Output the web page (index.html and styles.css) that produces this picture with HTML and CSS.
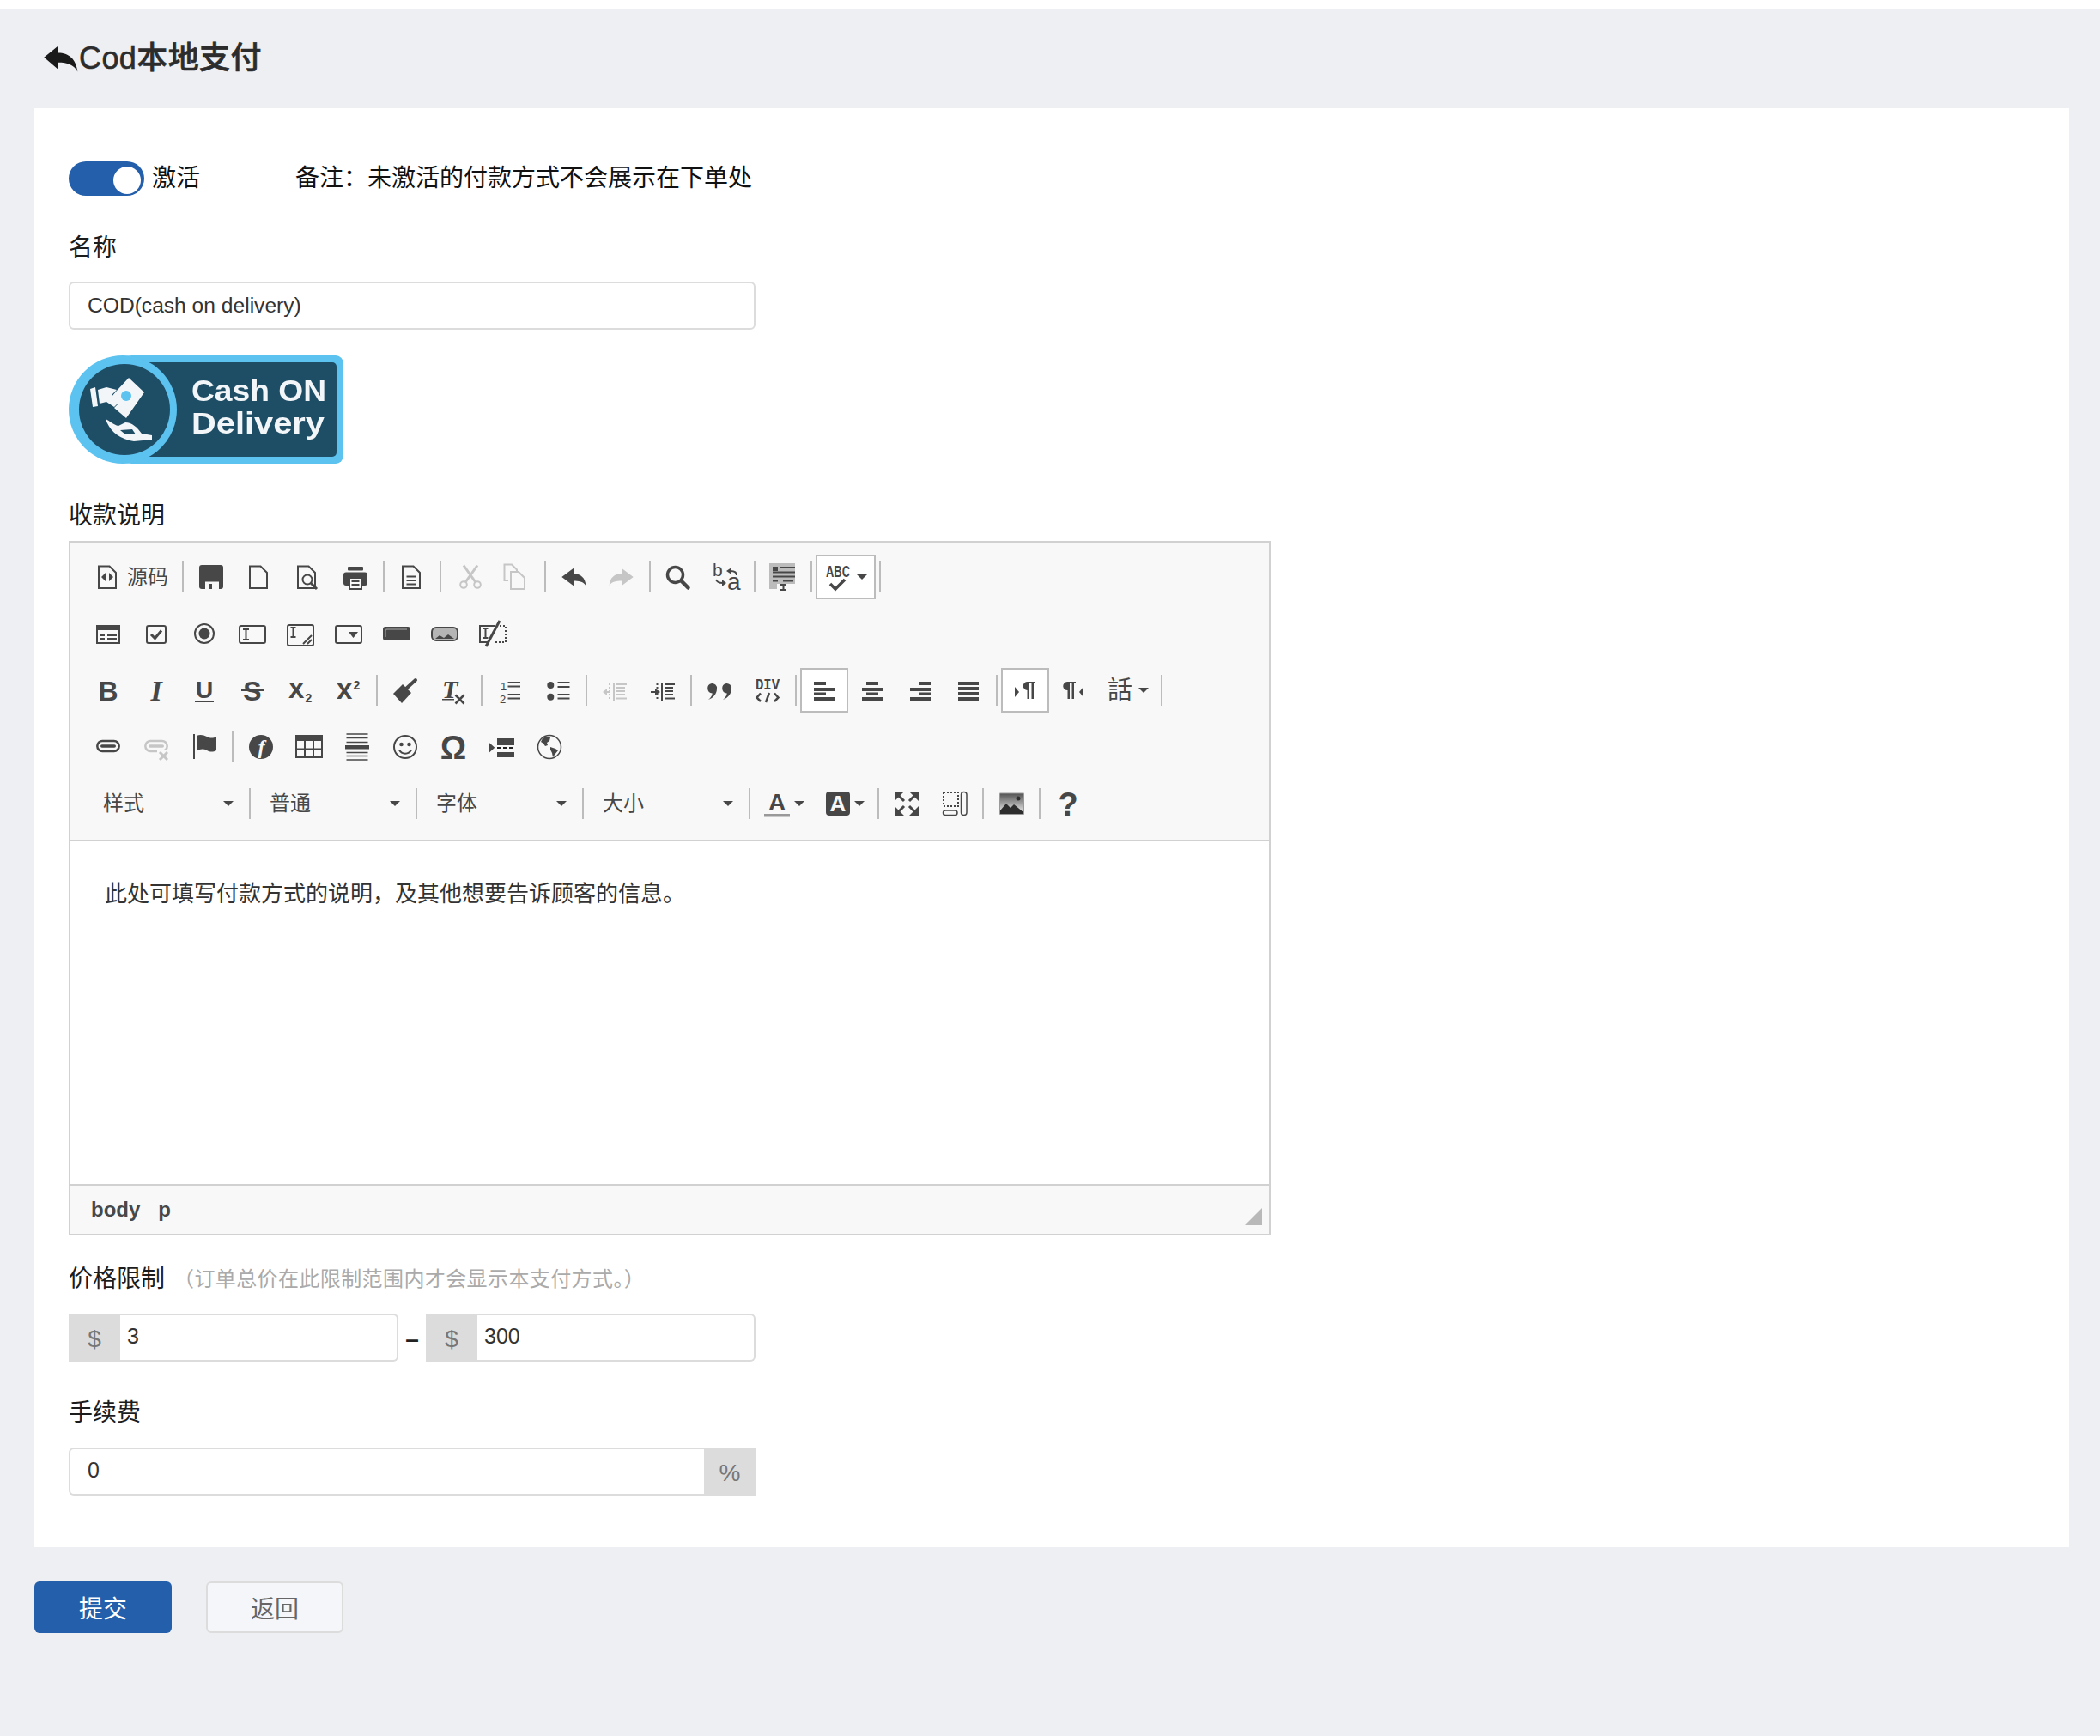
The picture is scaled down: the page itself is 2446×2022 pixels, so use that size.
FILE: index.html
```html
<!DOCTYPE html>
<html lang="zh-CN">
<head>
<meta charset="utf-8">
<title>Cod本地支付</title>
<link rel="stylesheet" href="styles.css">
</head>
<body>
<div class="page">
  <header class="head">
    <svg class="back" viewBox="0 0 32 32" preserveAspectRatio="none"><path d="M1 15 L14 3.500 V10.500 C23 10.500 30 16 31.500 29 C28 22 22 20 14 20 V27 Z"/></svg>
    <h1 class="title">Cod本地支付</h1>
  </header>

  <main class="card">
    <div class="activate">
      <span class="toggle"><span class="knob"></span></span>
      <span class="act-label">激活</span>
      <span class="act-note">备注&#xFF1A;未激活的付款方式不会展示在下单处</span>
    </div>

    <div class="label name-label">名称</div>
    <input class="input full" value="COD(cash on delivery)">

    <svg class="badge" viewBox="0 0 320 126">
      <rect x="64" y="0" width="256" height="126" rx="9" fill="#5cc2ef"/>
      <rect x="80" y="8" width="232" height="110" rx="5" fill="#1e4d66"/>
      <circle cx="63" cy="63" r="63" fill="#5cc2ef"/>
      <circle cx="65" cy="63" r="53" fill="#1e4d66"/>
      <path fill="#f2f6f8" d="M70 26 L88 43 L67 73 L53 61 L58 56 L50 48 L56 41 Z"/>
      <circle cx="67" cy="47" r="6" fill="#5cc2ef"/>
      <path fill="#f2f6f8" d="M25 39 L31 37 L34 59 L28 60 Z M34 40 L44 37 L56 40 L50 46 L58 55 L53 60 L44 54 L36 56 Z"/>
      <path fill="#f2f6f8" d="M43 74 C48 76 52 81 58 82 L66 78 C74 78 80 84 85 91 L97 93 L97 98 L76 100 C62 98 48 90 43 74 Z"/>
      <path fill="#1e4d66" d="M60 87 L74 86 L78 92 L66 92 Z"/>
      <text class="badge-text" x="143" y="53" textLength="157" lengthAdjust="spacingAndGlyphs">Cash ON</text>
      <text class="badge-text" x="143" y="91" textLength="155" lengthAdjust="spacingAndGlyphs">Delivery</text>
    </svg>

    <div class="label desc-label">收款说明</div>

    <section class="editor">
      <div class="toolbar">
        <div class="trow">
          <span class="btn src">
            <svg class="ic" viewBox="0 0 32 32"><path class="s" d="M5 3.500h12.500l7.500 7.500v18h-20z"/><path d="M8 16l5-5v10zM22 16l-5-5v10z"/></svg>
            <span class="src-text">源码</span>
          </span>
          <i class="sep"></i>
          <span class="btn"><svg class="ic" viewBox="0 0 32 32"><path d="M2 5a3 3 0 0 1 3-3h22a3 3 0 0 1 3 3v22a3 3 0 0 1-3 3H5a3 3 0 0 1-3-3z"/><rect class="bgf" x="9" y="21.500" width="16" height="8.500"/><rect x="13" y="24" width="4" height="6"/></svg></span>
          <span class="btn"><svg class="ic" viewBox="0 0 32 32"><path class="s" d="M5 3.500h12.500l7.500 7.500v18h-20z"/></svg></span>
          <span class="btn"><svg class="ic" viewBox="0 0 32 32"><path class="s" d="M5 3.500h12.500l7.500 7.500v18h-20z"/><circle class="s" cx="16" cy="19" r="5.500"/><path class="s w3" d="M20 23l7 7"/></svg></span>
          <span class="btn"><svg class="ic" viewBox="0 0 32 32"><rect x="7" y="4" width="18" height="4.500" rx="1"/><rect x="2" y="10.500" width="28" height="15.500" rx="3"/><rect class="bgf" x="8" y="16" width="16" height="14"/><path class="s" d="M9 17v13h14V17zM11.500 21h9M11.500 25h9"/></svg></span>
          <i class="sep"></i>
          <span class="btn"><svg class="ic" viewBox="0 0 32 32"><path class="s" d="M5 3.500h12.500l7.500 7.500v18h-20z"/><path class="s" d="M9.500 15.500h11M9.500 20h11M9.500 24.500h11"/></svg></span>
          <i class="sep"></i>
          <span class="btn off"><svg class="ic cut" viewBox="0 0 32 32"><circle class="s w2" cx="8" cy="25" r="3.800"/><circle class="s w2" cx="24" cy="25" r="3.800"/><path class="s w3" d="M10.500 21.500L24 2.500M21.500 21.500L8 2.500"/></svg></span>
          <span class="btn off"><svg class="ic" viewBox="0 0 32 32"><path class="s" d="M6 20H1.500V1.500H10l6 6v2"/><path class="s" d="M9 10h9l7 7v13H9z"/></svg></span>
          <i class="sep"></i>
          <span class="btn"><svg class="ic" viewBox="0 0 32 32"><path d="M2.300 16L16 5.700V12C24 12 30 17 30.300 26 27 21 22 20.500 16 20.500V26.300Z"/></svg></span>
          <span class="btn off"><svg class="ic" viewBox="0 0 32 32"><path d="M29.700 16L16 5.700V12C8 12 2 17 1.700 26 5 21 10 20.500 16 20.500V26.300Z"/></svg></span>
          <i class="sep"></i>
          <span class="btn"><svg class="ic" viewBox="0 0 32 32"><circle class="s w35" cx="12.500" cy="13.500" r="9"/><path class="s w45" d="M19.500 20.500l8 8" stroke-linecap="round"/></svg></span>
          <span class="btn"><svg class="ic" viewBox="0 0 32 32"><text class="t" x="0" y="15" font-size="21">b</text><text class="t" x="17" y="31" font-size="28">a</text><path class="s" d="M28 14c0-4-3-5-7-5"/><path d="M16 9l6-4v8z"/><path class="s" d="M4 19c1 3 4 4 8 4"/><path d="M16 23l-5-4v8z"/></svg></span>
          <i class="sep"></i>
          <span class="btn"><svg class="ic" viewBox="0 0 32 32"><path class="gr" d="M0 0h30v24H9v6H0z"/><path d="M4 4h6v5H4z"/><path class="s" d="M12 5h18M4 10.500h26M4 15.500h26M4 20.500h6M16 20.500h12M13 25h7M16.500 25v6M13 31h7"/></svg></span>
          <i class="sep"></i>
          <span class="btn drop box">
            <svg class="ic" viewBox="0 0 32 32"><text class="t b" x="2" y="15.500" font-size="18" textLength="28" lengthAdjust="spacingAndGlyphs">ABC</text><path class="s w35" d="M7 24l6 6L24 19"/></svg>
            <i class="caret"></i>
          </span>
          <i class="sep"></i>
        </div>

        <div class="trow">
          <span class="btn"><svg class="ic" viewBox="0 0 32 32"><rect class="s" x="3" y="7" width="26" height="20"/><rect x="2" y="6" width="28" height="6"/><path d="M6 16h6v3H6zM15 16h11v3H15zM6 21h6v3H6zM15 21h11v3H15z"/></svg></span>
          <span class="btn"><svg class="ic" viewBox="0 0 32 32"><rect class="s" x="5" y="7" width="22" height="20" rx="2"/><path class="s w3" d="M10 17l4.500 4.500L22 12.500"/></svg></span>
          <span class="btn"><svg class="ic" viewBox="0 0 32 32"><circle class="s" cx="16" cy="16" r="11"/><circle cx="16" cy="16" r="6.500"/></svg></span>
          <span class="btn"><svg class="ic" viewBox="0 0 32 32"><rect class="s" x="1" y="7" width="30" height="20" rx="2"/><path class="s" d="M5 11h7M8.500 11v12M5 23h7"/></svg></span>
          <span class="btn"><svg class="ic" viewBox="0 0 32 32"><rect class="s" x="1" y="6" width="30" height="24" rx="2"/><path class="s" d="M4.500 9h6M7.500 9v11M4.500 20h6M19 28l10-10M24 28l5-5"/></svg></span>
          <span class="btn"><svg class="ic" viewBox="0 0 32 32"><rect class="s" x="1" y="7" width="30" height="20" rx="2"/><path d="M16 14h11l-5.500 7z"/></svg></span>
          <span class="btn"><svg class="ic" viewBox="0 0 32 32"><rect x="0" y="8" width="32" height="16" rx="3"/><path class="s w15 lite" d="M3 20v-7a2 2 0 0 1 2-2h23"/></svg></span>
          <span class="btn"><svg class="ic" viewBox="0 0 32 32"><rect class="gr2" x="1" y="9" width="30" height="14" rx="5"/><path d="M5 22l5-4 5 3 5-4 7 5z"/><rect class="s" x="1" y="9" width="30" height="15" rx="5"/></svg></span>
          <span class="btn"><svg class="ic" viewBox="0 0 32 32"><path class="s" d="M19 7H1v19h10"/><path class="s" d="M4.500 10h6M7.500 10v11M4.500 21h6"/><path class="s dots" d="M24 7h7v19H17"/><path class="s w3" d="M24 1L8 31"/></svg></span>
        </div>

        <div class="trow">
          <span class="btn"><svg class="ic" viewBox="0 0 32 32"><text class="t b" x="16" y="27.700" font-size="32" text-anchor="middle">B</text></svg></span>
          <span class="btn"><svg class="ic" viewBox="0 0 32 32"><text class="t serif bi" x="16" y="27.700" font-size="34" text-anchor="middle">I</text></svg></span>
          <span class="btn"><svg class="ic" viewBox="0 0 32 32"><text class="t b" x="16" y="24.700" font-size="28" text-anchor="middle">U</text><rect x="5" y="28" width="22" height="2"/></svg></span>
          <span class="btn"><svg class="ic" viewBox="0 0 32 32"><text class="t b" x="16" y="27.700" font-size="32" text-anchor="middle">S</text><rect x="3" y="15" width="26" height="2"/></svg></span>
          <span class="btn"><svg class="ic" viewBox="0 0 32 32"><text class="t b" x="2" y="24.700" font-size="33">x</text><text class="t b" x="21.500" y="30" font-size="14">2</text></svg></span>
          <span class="btn"><svg class="ic" viewBox="0 0 32 32"><text class="t b" x="2" y="25.700" font-size="33">x</text><text class="t b" x="21.500" y="14.700" font-size="14">2</text></svg></span>
          <i class="sep"></i>
          <span class="btn"><svg class="ic" viewBox="0 0 32 32"><path d="M2 20L13 9 23 19 12 31Z"/><path class="s w4" d="M17 14L28 4" stroke-linecap="round"/></svg></span>
          <span class="btn"><svg class="ic" viewBox="0 0 32 32"><text class="t serif bi" x="3" y="24.700" font-size="30">T</text><rect x="3" y="26" width="14" height="1.500"/><path class="s w25" d="M18.500 21.500l10 10M28.500 21.500l-10 10"/></svg></span>
          <i class="sep"></i>
          <span class="btn"><svg class="ic" viewBox="0 0 32 32"><text class="t" x="5" y="16" font-size="13">1</text><text class="t" x="4" y="30.500" font-size="13">2</text><path class="s" d="M13.500 7h14.500M13.500 11.500h14.500M13.500 21h14.500M13.500 25.500h14.500"/></svg></span>
          <span class="btn"><svg class="ic" viewBox="0 0 32 32"><circle cx="7.300" cy="10" r="4"/><circle cx="7.300" cy="23.700" r="4"/><path class="s" d="M15.500 7h14M15.500 12h14M15.500 21h14M15.500 25.500h14"/></svg></span>
          <i class="sep"></i>
          <span class="btn off"><svg class="ic" viewBox="0 0 32 32"><path class="s" d="M15 7v22"/><path class="s dots" d="M10 8v20"/><path class="s" d="M4 18h6"/><path d="M2 18l5-4v8z"/><path class="s" d="M18 9h12M18 13h10M18 17h10M18 21h10M18 25.500h12"/></svg></span>
          <span class="btn"><svg class="ic" viewBox="0 0 32 32"><path class="s" d="M15 7v22"/><path class="s dots" d="M9.500 8v20"/><path class="s" d="M2 18h6"/><path d="M13 18l-6-4v8z"/><path class="s" d="M18 9h12M18 13h10M18 17h10M18 21h10M18 25.500h12"/></svg></span>
          <i class="sep"></i>
          <span class="btn"><svg class="ic" viewBox="0 0 32 32"><path d="M7 8a5.500 5.500 0 0 1 6 6c0 6-4 11-10 13 3-2.500 4.500-5 4.700-7.500A5.800 5.800 0 0 1 7 8z"/><path d="M24 8a5.500 5.500 0 0 1 6 6c0 6-4 11-10 13 3-2.500 4.500-5 4.700-7.500A5.800 5.800 0 0 1 24 8z"/></svg></span>
          <span class="btn"><svg class="ic" viewBox="0 0 32 32"><text class="t mono" x="2" y="15" font-size="19" textLength="28" lengthAdjust="spacingAndGlyphs">DIV</text><path class="s w25" d="M8 19.500L3.500 24.500 8 29M24 19.500l4.500 5L24 29M18 19l-4 11"/></svg></span>
          <i class="sep"></i>
          <span class="btn box"><svg class="ic" viewBox="0 0 32 32"><path d="M4 6h14v4H4zM4 13h24v4H4zM4 18.500h14v3.500H4zM4 24h24v4H4z"/></svg></span>
          <span class="btn"><svg class="ic" viewBox="0 0 32 32"><path d="M9 6h14v4H9zM4 13h24v4H4zM9 18.500h14v3.500H9zM4 24h24v4H4z"/></svg></span>
          <span class="btn"><svg class="ic" viewBox="0 0 32 32"><path d="M14 6h14v4H14zM4 13h24v4H4zM14 18.500h14v3.500H14zM4 24h24v4H4z"/></svg></span>
          <span class="btn"><svg class="ic" viewBox="0 0 32 32"><path d="M4 6h24v4H4zM4 12h24v4H4zM4 18h24v4H4zM4 24h24v4H4z"/></svg></span>
          <i class="sep"></i>
          <span class="btn box"><svg class="ic" viewBox="0 0 32 32"><path d="M4 12l5 6-5 6z"/><path d="M19 6h9v2h-2v18h-2.500V8H21v18h-2.500V16a5 5 0 0 1 .500-10z"/></svg></span>
          <span class="btn"><svg class="ic" viewBox="0 0 32 32"><path d="M28 12l-5 6 5 6z"/><path d="M9 6h10v2h-2v18h-2.500V8H12v18H9.500V16a5 5 0 0 1-.500-10z"/></svg></span>
          <span class="btn drop lang"><span class="lang-text">話</span><i class="caret"></i></span>
          <i class="sep"></i>
        </div>

        <div class="trow">
          <span class="btn"><svg class="ic" viewBox="0 0 32 32"><rect class="s w25" x="3.300" y="9" width="25.400" height="12" rx="6"/><rect x="7" y="13.200" width="18" height="3.600" rx="1.800"/></svg></span>
          <span class="btn off"><svg class="ic" viewBox="0 0 32 32"><rect class="s w25" x="3.300" y="9" width="25.400" height="12" rx="6"/><rect x="7" y="13.200" width="18" height="3.600" rx="1.800"/><rect class="bgf" x="17" y="19" width="14" height="13"/><path class="s w3" d="M20 22l9 9M29 22l-9 9"/></svg></span>
          <span class="btn"><svg class="ic" viewBox="0 0 32 32"><rect x="3" y="1" width="2" height="29"/><path d="M7 3C11 1 15 2 19 4s7 2 11 0V20c-4 2-7 2-11 0S11 18 7 21z"/></svg></span>
          <i class="sep"></i>
          <span class="btn"><svg class="ic" viewBox="0 0 32 32"><circle cx="16" cy="16" r="14"/><text class="serif bi flash-f" x="16.500" y="24" font-size="24" text-anchor="middle">f</text></svg></span>
          <span class="btn"><svg class="ic" viewBox="0 0 32 32"><rect class="s" x="1" y="3" width="30" height="25"/><rect x="0" y="2" width="32" height="7"/><path class="s" d="M11 9v19M21 9v19M1 18.500h30"/></svg></span>
          <span class="btn"><svg class="ic" viewBox="0 0 32 32"><path d="M2 14h28v4.500H2z"/><path class="s w15" d="M3.500 1h25M3.500 5.500h25M3.500 10.500h25M3.500 22.500h25M3.500 26.500h25M3.500 31h25"/></svg></span>
          <span class="btn"><svg class="ic" viewBox="0 0 32 32"><circle class="s" cx="16" cy="16" r="13"/><circle cx="11.500" cy="13" r="2.300"/><circle cx="20.500" cy="13" r="2.300"/><path class="s" d="M9 19.500a8 8 0 0 0 14 0"/></svg></span>
          <span class="btn"><svg class="ic" viewBox="0 0 32 32"><text class="t b" x="16" y="29.500" font-size="38" text-anchor="middle">Ω</text></svg></span>
          <span class="btn"><svg class="ic" viewBox="0 0 32 32"><path d="M1 10.300l7.300 6.500L1 23.300zM11 6h20v8H11zM11 22h20v6H11z"/><path class="s dash" d="M11 17h20"/></svg></span>
          <span class="btn"><svg class="ic" viewBox="0 0 32 32"><circle class="s w15" cx="16" cy="16" r="13.500"/><path d="M8 6c3-2 7-3 9-1l-1 4-3 2 1 3-3 1-2-3-3-2zM17 16l6 2 3 2-4 5-2 3-1-5-2-4z"/></svg></span>
        </div>

        <div class="trow combos">
          <span class="combo"><span class="combo-text">样式</span><i class="caret"></i></span>
          <i class="sep"></i>
          <span class="combo"><span class="combo-text">普通</span><i class="caret"></i></span>
          <i class="sep"></i>
          <span class="combo"><span class="combo-text">字体</span><i class="caret"></i></span>
          <i class="sep"></i>
          <span class="combo"><span class="combo-text">大小</span><i class="caret"></i></span>
          <i class="sep"></i>
          <span class="btn drop color"><svg class="ic" viewBox="0 0 32 32"><text class="t b" x="16" y="24" font-size="28" text-anchor="middle">A</text><rect class="gr3" x="1" y="28" width="30" height="3.500"/></svg><i class="caret"></i></span>
          <span class="btn drop color"><svg class="ic" viewBox="0 0 32 32"><rect x="3" y="2" width="28" height="28" rx="4"/><text class="t b flash-f" x="17" y="25" font-size="26" text-anchor="middle">A</text></svg><i class="caret"></i></span>
          <i class="sep"></i>
          <span class="btn"><svg class="ic" viewBox="0 0 32 32"><path d="M2 2h11L2 13zM30 2v11L19 2zM2 30V19l11 11zM30 30H19l11-11z"/><path class="s w3" d="M6 6l7 7M26 6l-7 7M6 26l7-7M26 26l-7-7"/></svg></span>
          <span class="btn"><svg class="ic" viewBox="0 0 32 32"><path class="s dots" d="M3 3h17v16H3z"/><rect class="s w15" x="23.500" y="2.500" width="6.500" height="27" rx="3.250"/><rect class="s w15" x="2.500" y="24" width="16.500" height="5.500" rx="2.750"/></svg></span>
          <i class="sep"></i>
          <span class="btn"><svg class="ic" viewBox="0 0 32 32"><defs><linearGradient id="sky" x1="0" y1="0" x2="0" y2="1"><stop offset="0" stop-color="#555"/><stop offset="1" stop-color="#f4f4f4"/></linearGradient></defs><rect x="2" y="3.500" width="29" height="25.500" rx="1" fill="#9a9a9a"/><rect x="3" y="4.500" width="27" height="23.500" fill="url(#sky)"/><path d="M3 24l7-8 5 5 4-4 11 9v2H3z" class="dark"/><circle cx="24" cy="10" r="2.500" class="dark"/></svg></span>
          <i class="sep"></i>
          <span class="btn"><svg class="ic" viewBox="0 0 32 32"><text class="t b" x="16" y="29.500" font-size="38" text-anchor="middle">?</text></svg></span>
        </div>
      </div>

      <div class="edit-body">此处可填写付款方式的说明&#xFF0C;及其他想要告诉顾客的信息。</div>

      <div class="edit-foot">
        <span class="path">body</span><span class="path path-p">p</span>
        <i class="resizer"></i>
      </div>
    </section>

    <div class="label price-label">价格限制<span class="hint">&#xFF08;订单总价在此限制范围内才会显示本支付方式。&#xFF09;</span></div>
    <div class="range">
      <div class="igroup">
        <span class="addon">$</span>
        <input class="input joined-l" value="3">
      </div>
      <span class="dash">–</span>
      <div class="igroup">
        <span class="addon">$</span>
        <input class="input joined-l" value="300">
      </div>
    </div>

    <div class="label fee-label">手续费</div>
    <div class="igroup fee">
      <input class="input wide joined-r" value="0">
      <span class="addon">%</span>
    </div>
  </main>

  <footer class="actions">
    <button class="action primary">提交</button>
    <button class="action plain">返回</button>
  </footer>
</div>
</body>
</html>
```
FILE: styles.css
```css
* { box-sizing: border-box; }
html, body { margin: 0; padding: 0; background: #fff; }
body {
  font-family: "Liberation Sans", "Noto Sans CJK SC", sans-serif;
  color: #1c1c1c;
}
.page {
  margin-top: 10px;
  min-height: 2012px;
  background: #eeeff3;
}

/* header */
.head { height: 116px; display: flex; align-items: center; padding-left: 50px; }
.back { width: 41px; height: 38px; fill: #1a1a1a; flex: none; }
.title { margin: 0 0 0 1px; font-size: 36px; line-height: 44px; font-weight: 500; letter-spacing: 0.4px; color: #2c2c2c; -webkit-text-stroke: 0.6px #2c2c2c; }

/* card */
.card { margin: 0 36px 0 40px; padding: 62px 40px 60px; background: #fff; }
.activate { display: flex; align-items: center; height: 40px; font-size: 28px; color: #111; }
.toggle { position: relative; flex: none; width: 88px; height: 40px; border-radius: 20px; background: #245fab; }
.knob { position: absolute; right: 4px; top: 6px; width: 32px; height: 32px; border-radius: 50%; background: #fff; }
.act-label { margin-left: 9px; padding-bottom: 6px; }
.act-note { margin-left: 111px; padding-bottom: 6px; }

.label { font-size: 28px; line-height: 40px; color: #1c1c1c; }
.name-label { margin-top: 40px; margin-bottom: 20px; padding-top: 1px; height: 40px; }
.desc-label { margin-top: 40px; margin-bottom: 10px; padding-top: 1px; height: 40px; }
.price-label { display: flex; align-items: center; height: 40px; margin-top: 31px; margin-bottom: 20px; }
.fee-label { margin-top: 40px; margin-bottom: 20px; }
.hint { margin-left: 10px; font-size: 24px; letter-spacing: 0.4px; color: #aaa; }

.input {
  display: block;
  height: 56px;
  padding: 0 20px;
  border: 2px solid #dcdcdc;
  border-radius: 6px;
  background: #fff;
  font-family: "Liberation Sans", "Noto Sans CJK SC", sans-serif;
  font-size: 25px;
  color: #333;
  outline: none;
}
.full { width: 800px; font-size: 24.6px; }
.badge { display: block; width: 320px; height: 126px; margin-top: 30px; filter: blur(0.4px); }
.badge-text { font-family: "Liberation Sans", sans-serif; font-weight: 700; font-size: 35px; fill: #f2f6f8; }

/* editor */
.editor { width: 1400px; border: 2px solid #d1d1d1; }
.toolbar { padding: 7px 16px 9px; background: #f8f8f8; border-bottom: 2px solid #d1d1d1; }
.trow { display: flex; align-items: center; height: 66px; }
.combos { padding-left: 4px; }
.btn { display: flex; align-items: center; justify-content: center; flex: none; width: 56px; height: 52px; color: #474747; }
.btn.off { color: #c6c6c6; }
.box { background: #fff; border: 2px solid #bcbcbc; }
.ic { display: block; width: 32px; height: 32px; flex: none; overflow: visible; fill: currentColor; }
.ic.cut { margin-left: 3px; }
.ic .s { fill: none; stroke: currentColor; stroke-width: 2; }
.ic .w15 { stroke-width: 1.5; }
.ic .w2 { stroke-width: 2; }
.ic .w25 { stroke-width: 2.5; }
.ic .w3 { stroke-width: 3; }
.ic .w35 { stroke-width: 3.5; }
.ic .w4 { stroke-width: 4; }
.ic .w45 { stroke-width: 4.5; }
.ic .dots { stroke-dasharray: 2 2; }
.ic .dash { stroke-dasharray: 5 2; }
.ic .lite { stroke: #8a8a8a; }
.ic .bgf { fill: #f8f8f8; }
.ic .gr { fill: #bcbcbc; }
.ic .gr2 { fill: #b5b5b5; }
.ic .gr3 { fill: #999; }
.ic .dark { fill: #2d2d2d; }
.t { font-family: "Liberation Sans", sans-serif; }
.b { font-weight: 700; }
.serif { font-family: "Liberation Serif", serif; }
.bi { font-weight: 700; font-style: italic; }
.mono { font-family: "Liberation Mono", monospace; font-weight: 700; }
.flash-f { fill: #f8f8f8; }
.sep { display: block; flex: none; width: 2px; height: 36px; margin: 0 4px; background: #bcbcbc; }
.src { width: 110px; justify-content: flex-start; padding-left: 12px; }
.src-text { margin-left: 6px; font-size: 24px; line-height: 32px; }
.drop { width: 70px; justify-content: flex-start; padding-left: 8px; }
.caret { display: block; flex: none; width: 0; height: 0; margin-left: 6px; border-style: solid; border-width: 6px 6px 0; border-color: #474747 transparent transparent; }
.lang { padding-left: 12px; }
.lang-text { font-size: 29px; line-height: 32px; }
.lang .caret { margin-left: 7px; }
.color { padding-left: 11px; }
.color .caret { margin-left: 4px; }
.combo { display: flex; align-items: center; justify-content: space-between; flex: none; width: 184px; height: 52px; padding: 0 14px 0 18px; color: #474747; font-size: 24px; }
.combo-text { padding-bottom: 6px; }

.edit-body { height: 399px; padding: 43px 40px 0; background: #fff; font-size: 26px; line-height: 36px; color: #333; }
.edit-foot { position: relative; display: flex; align-items: center; height: 58px; padding-left: 24px; background: #f8f8f8; border-top: 2px solid #d1d1d1; font-size: 24px; font-weight: 700; color: #484848; }
.path-p { margin-left: 21px; }
.resizer { position: absolute; right: 8px; bottom: 10px; width: 0; height: 0; border-style: solid; border-width: 0 0 20px 20px; border-color: transparent transparent #b9b9b9; }

/* input groups */
.range { display: flex; width: 800px; height: 56px; }
.igroup { display: flex; flex: 1 1 0; min-width: 0; height: 56px; }
.addon { display: flex; align-items: center; justify-content: center; flex: none; width: 60px; background: #dcdcdc; color: #777; font-size: 28px; padding-top: 3px; }
.igroup .input { flex: 1; min-width: 0; width: 0; padding-bottom: 3px; }
.joined-l { border-left: 0; border-radius: 0 6px 6px 0; padding-left: 8px; }
.joined-r { border-right: 0; border-radius: 6px 0 0 6px; }
.dash { flex: none; width: 32px; height: 56px; padding-top: 3px; text-align: center; font-size: 28px; font-weight: 700; line-height: 53px; color: #222; }
.fee { width: 800px; flex: none; }

/* actions */
.actions { display: flex; gap: 40px; padding: 40px 0 0 40px; }
.action { width: 160px; height: 60px; padding: 0; border-radius: 6px; font-family: "Liberation Sans", "Noto Sans CJK SC", sans-serif; font-size: 28px; }
.primary { border: 0; background: #245fab; color: #fff; }
.plain { border: 2px solid #dcdcdc; background: #f4f6fa; color: #666; }
```
